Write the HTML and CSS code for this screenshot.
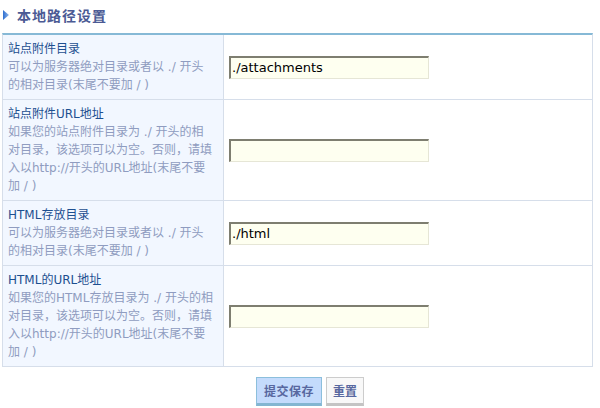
FILE: index.html
```html
<!DOCTYPE html>
<html lang="zh-CN">
<head>
<meta charset="utf-8">
<title>本地路径设置</title>
<link rel="stylesheet" href="styles.css">
</head>
<body>
<div class="title">
  <svg class="arrow" width="6" height="10" viewBox="0 0 6 10" aria-hidden="true">
    <defs>
      <linearGradient id="ag" x1="0" y1="0" x2="1" y2="0">
        <stop offset="0" stop-color="#2f6fd0"/>
        <stop offset="1" stop-color="#8fb6ea"/>
      </linearGradient>
    </defs>
    <polygon points="0,0 6,5 0,10" fill="url(#ag)"/>
  </svg>
  <span class="title-text">本地路径设置</span>
</div>
<table class="settings">
  <tr>
    <td class="label">
      <div class="name">站点附件目录</div>
      <div class="desc">可以为服务器绝对目录或者以 ./ 开头的相对目录(末尾不要加 / )</div>
    </td>
    <td class="field"><input class="text" type="text" value="./attachments"></td>
  </tr>
  <tr>
    <td class="label">
      <div class="name">站点附件URL地址</div>
      <div class="desc">如果您的站点附件目录为 ./ 开头的相对目录，该选项可以为空。否则，请填入以http://开头的URL地址(末尾不要加 / )</div>
    </td>
    <td class="field"><input class="text" type="text" value=""></td>
  </tr>
  <tr>
    <td class="label">
      <div class="name">HTML存放目录</div>
      <div class="desc">可以为服务器绝对目录或者以 ./ 开头的相对目录(末尾不要加 / )</div>
    </td>
    <td class="field"><input class="text" type="text" value="./html"></td>
  </tr>
  <tr>
    <td class="label">
      <div class="name">HTML的URL地址</div>
      <div class="desc">如果您的HTML存放目录为 ./ 开头的相对目录，该选项可以为空。否则，请填入以http://开头的URL地址(末尾不要加 / )</div>
    </td>
    <td class="field"><input class="text" type="text" value=""></td>
  </tr>
</table>
<div class="actions">
  <button class="btn btn-submit" type="submit">提交保存</button>
  <button class="btn btn-reset" type="reset">重置</button>
</div>
</body>
</html>
```
FILE: styles.css
```css
html, body {
  margin: 0;
  padding: 0;
  background: #ffffff;
}
body {
  font-family: "DejaVu Sans", "Noto Sans CJK SC", sans-serif;
  font-size: 12px;
  color: #000;
}
.title {
  height: 33px;
  box-sizing: border-box;
  padding-top: 5px;
  display: flex;
  align-items: flex-start;
}
.arrow {
  margin: 5px 8px 0 3px;
  flex: none;
}
.title-text {
  font-family: "Noto Sans CJK SC", sans-serif;
  font-weight: bold;
  font-size: 14px;
  line-height: 20px;
  letter-spacing: 1px;
  color: #4b5a94;
}
.settings {
  margin-left: 2px;
  width: 591px;
  box-sizing: border-box;
  border-collapse: separate;
  border-spacing: 0;
  border-top: 2px solid #86b9d6;
  border-left: 1px solid #d6deea;
  border-right: 1px solid #d6deea;
}
.settings td {
  border-bottom: 1px solid #d6deea;
  vertical-align: middle;
}
.label {
  width: 205px;
  padding: 5px 10px 5px 5px;
  background: #f2f7ff;
  border-right: 1px solid #d6deea;
  line-height: 18px;
  vertical-align: top;
}
.settings td.label {
  vertical-align: top;
}
.name {
  color: #1d4f90;
}
.desc {
  color: #8f9cc0;
}
.field {
  padding: 0 5px;
}
.text {
  display: block;
  width: 200px;
  height: 23px;
  box-sizing: border-box;
  margin: 0;
  padding: 0 0 0 1px;
  background: #fefff0;
  border-style: solid;
  border-width: 2px 1px 1px 2px;
  border-color: #7e7e70 #e6e6d6 #e6e6d6 #7e7e70;
  font-family: "DejaVu Sans", sans-serif;
  font-size: 13px;
  color: #000;
  outline: none;
}
.actions {
  display: flex;
  gap: 4px;
  margin-top: 10px;
  padding-left: 256px;
}
.btn {
  height: 29px;
  box-sizing: border-box;
  margin: 0;
  font-family: "Noto Sans CJK SC", sans-serif;
  font-weight: bold;
  font-size: 12px;
  line-height: 18px;
  border-style: solid;
  border-width: 1px 1px 3px 1px;
  cursor: pointer;
}
.btn-submit {
  padding: 0 7px;
  letter-spacing: 0.5px;
  background: #c4dbfc;
  border-color: #8cbfdc #8cbfdc #84b6d2 #8cbfdc;
  color: #5868a0;
}
.btn-reset {
  padding: 0 6px;
  background: #f8f8f8;
  border-color: #cccccc #cccccc #c4c4c4 #cccccc;
  color: #5868a0;
}
```
